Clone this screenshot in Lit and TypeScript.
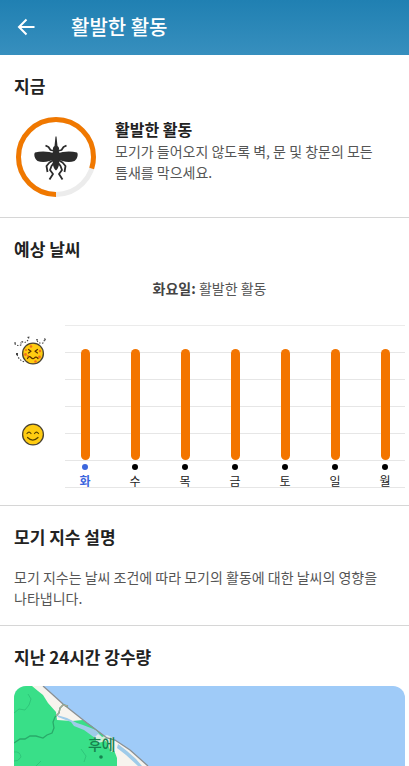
import { LitElement, html, css, svg } from "lit";
import { customElement, property, state } from "lit/decorators.js";
import { classMap } from "lit/directives/class-map.js";
import { styleMap } from "lit/directives/style-map.js";

interface Day {
  label: string;
  level: number;
}

const DAYS: Day[] = ["화", "수", "목", "금", "토", "일", "월"].map((label) => ({ label, level: 80 }));

@customElement("activity-ring")
class ActivityRing extends LitElement {
  @property({ type: Number }) value = 0;

  static styles = css`
    :host { display: block; flex: none; width: 80px; height: 80px; }
    svg { display: block; width: 100%; height: 100%; }
  `;

  render() {
    const half = svg`
      <path d="M39 33 C33 30 25 30 19 31.500 C17.500 33 18.500 38 21.500 40 C27 42 34 40.500 39 38 Z" fill="#2b2b2b"/>
      <g fill="none" stroke="#2b2b2b" stroke-width="1.800" stroke-linejoin="round">
        <path d="M38.500 30 L34.500 29 L32.500 26 L29.500 24.500"/>
        <path d="M38.500 38.500 L33.500 41.500 L30.500 45 L31.500 51"/>
        <path d="M38.500 41 L35.500 45 L34 49 L37 53 L33.500 58.500"/>
      </g>`;
    return html`
      <svg viewBox="0 0 80 80" role="img" aria-label="모기 활동">
        <circle cx="40" cy="40" r="37.5" fill="none" stroke="#ececec" stroke-width="5" />
        <circle cx="40" cy="40" r="37.5" fill="none" stroke="#f07800" stroke-width="5" pathLength="100"
          stroke-dasharray="${this.value} 100" transform="rotate(90 40 40)" />
        <g transform="translate(0 4)">
          ${half}
          <g transform="translate(80 0) scale(-1 1)">${half}</g>
          <path d="M39.500 15.500 L40.500 15.500 L41.500 25 C43.400 26 43.400 28.500 42.500 29.500 C44 31.500 44 35 42.800 37 C43.800 42 43 47 40 49.500 C37 47 36.200 42 37.200 37 C36 35 36 31.500 37.500 29.500 C36.600 28.500 36.600 26 38.500 25 Z" fill="#2b2b2b"/>
        </g>
      </svg>`;
  }
}

@customElement("mood-face")
class MoodFace extends LitElement {
  @property() mood = "happy";

  static styles = css`
    :host { display: block; width: 36px; height: 36px; }
    svg { display: block; width: 100%; height: 100%; }
  `;

  render() {
    const happy = svg`
      <g fill="none" stroke="#5a4300" stroke-width="1.2" stroke-linecap="round">
        <path d="M13 17.500 Q15 14.800 17 17.500 M20.500 17.500 Q22.500 14.800 24.500 17.500"/>
        <path d="M13.500 21.500 Q18.800 26.800 24 21.500"/>
      </g>`;
    const bitten = svg`
      <g fill="#f3701c">
        <circle cx="17" cy="11.500" r="1.300"/><circle cx="11.500" cy="19.500" r="1.400"/>
        <circle cx="26" cy="16" r="1.200"/><circle cx="25.500" cy="22" r="1.400"/>
        <circle cx="14" cy="21" r="1"/><circle cx="21.500" cy="26.500" r="1.300"/><circle cx="12" cy="15" r="1"/>
      </g>
      <g fill="none" stroke="#5a3000" stroke-width="1.200" stroke-linecap="round" stroke-linejoin="round">
        <path d="M14.500 14.500 L17 16.200 L14.500 18 M23.500 14.500 L21 16.200 L23.500 18"/>
        <path d="M13.500 23.500 Q15 20.500 17 22.500 T20.500 22.800 T24 23.500"/>
      </g>
      <g fill="none" stroke="#444" stroke-width="1.100" stroke-dasharray="1.500 1.500">
        <path d="M0.500 8.500 Q4 12 8 9.500 Q5.500 6 8 6.500 Q11 9 14 5"/>
        <path d="M23 5.500 Q25 9 29 8 L31 4"/>
        <path d="M3 19.500 Q5 25.500 11 27"/>
      </g>
      <path d="M13 2 L15.500 1.500 L15 4 Z M22 4 L24 4 L23 6 Z M30 3 L32 4 L31 6 Z M2 18 L4 18 L4 20 L2 20 Z M0 7 L2 7.500 L1.500 9 Z" fill="#444"/>`;
    return html`
      <svg viewBox="0 0 36 36" role="img" aria-label=${this.mood === "happy" ? "활동 없음" : "매우 활발"}>
        <circle cx="19" cy="18.500" r="10.400" fill="#fc1" stroke="#4a4230" stroke-width="1.300" />
        ${this.mood === "happy" ? happy : bitten}
      </svg>`;
  }
}

@customElement("forecast-chart")
class ForecastChart extends LitElement {
  @property({ attribute: false }) days: Day[] = [];
  @property({ type: Number }) selected = 0;

  static styles = css`
    :host { display: flex; }
    .scale {
      display: flex; flex-direction: column; justify-content: space-between;
      flex: none; width: 51px; height: 117px; padding-top: 10px;
    }
    .plot { display: grid; flex: 1; min-width: 0; }
    .lines, .days { grid-area: 1 / 1; }
    .lines { display: grid; grid-template-rows: repeat(6, 27px); border-top: 1px solid #ebebeb; }
    .line { border-bottom: 1px solid #e6e6e6; }
    .days {
      display: flex; justify-content: space-between;
      margin: 0; padding: 0; list-style: none;
    }
    .day { display: flex; flex-direction: column; align-items: center; width: 40px; }
    .track { display: flex; align-items: flex-end; height: 135px; }
    .bar { width: 9px; border-radius: 5px; background: #f37500; }
    .dot { width: 6px; height: 6px; margin-top: 4px; border-radius: 50%; background: #000; }
    .name { margin-top: 3px; font-size: 12px; line-height: 16px; color: #222; }
    .on .dot { background: #3b66dd; }
    .on .name { color: #3b66dd; font-weight: 700; }
  `;

  render() {
    return html`
      <div class="scale">
        <mood-face mood="bitten"></mood-face>
        <mood-face mood="happy"></mood-face>
      </div>
      <div class="plot">
        <div class="lines">${[1, 2, 3, 4, 5, 6].map(() => html`<div class="line"></div>`)}</div>
        <ul class="days">
          ${this.days.map((d, i) => html`
            <li class=${classMap({ day: true, on: i === this.selected })}>
              <div class="track"><div class="bar" style=${styleMap({ height: `${Math.round(d.level * 1.39)}px` })}></div></div>
              <div class="dot"></div>
              <div class="name">${d.label}</div>
            </li>`)}
        </ul>
      </div>`;
  }
}

@customElement("rain-map")
class RainMap extends LitElement {
  static styles = css`
    :host { display: block; height: 80px; border-radius: 12px 12px 0 0; overflow: hidden; background: #9fcbf8; }
    svg { display: block; width: 100%; height: 100%; }
    .place {
      font: 500 15px "Noto Sans CJK KR", sans-serif; fill: #16824f;
    }
  `;

  render() {
    return html`
      <svg viewBox="0 0 391 80" preserveAspectRatio="xMinYMin slice">
        <path d="M0 0 H29 L38 8 L49 18 L73 37 L93 52 L101 54 L116 64 L134 80 H0 Z" fill="#f7f4ee" />
        <path d="M0 0 H18 L24 5 L29 9 L34 17 L42 26 L43 34 L58 35 L69 34 L78 40 L93 52 L97 58 L100 64 L103 72 L103 80 H0 Z" fill="#39df88" />
        <path d="M43 29 L53 32 L63 37 L69 39 L82 44 L88 51 L81 52 L70 44 L60 40 L57 36 L44 31 Z M104 58 L113 65 L122 73 L128 80 L124 80 L112 69 L103 62 Z" fill="#9fcbe9" />
        <path d="M80 52 L84 48 L88 51 L93 49 L101 53 L101 65 L97 66 L92 55 L84 57 Z" fill="#f3f2ec" opacity="0.8" />
        <path d="M29 0 L38 8 L49 18 L73 37 L93 52 L101 54 L116 64 L134 80" fill="none" stroke="#8b9093" stroke-width="1.300" />
        <path d="M54 20 L49 19 L46 22 L45 27 L41 31 L39 36 L40 42 L38 47 L33 49 L29 52 L22 50 L16 50 L11 53 L6 53 L0 57" fill="none" stroke="#29aa6a" stroke-width="1.300" />
        <path d="M54 20 L49 19 L46 22 L45 27 L42 30" fill="none" stroke="#aaa39a" stroke-width="1.300" />
        <path d="M0 27 L5 23 L11 24 L15 19 L17 13 L14 8 M0 66 Q6 65 7 71 Q4 76 0 75 M67 63 L72 70 L70 76 M22 80 L27 75" fill="none" stroke="#2fc67a" stroke-width="1" />
        <text class="place" x="74" y="64">후에</text>
        <circle cx="87" cy="71" r="1.800" fill="#16824f" />
      </svg>`;
  }
}

@customElement("app-root")
class AppRoot extends LitElement {
  @state() private selected = 0;

  static styles = css`
    :host {
      display: block; background: #fff; color: #222;
      font-family: "Noto Sans CJK KR", "Noto Sans", sans-serif;
      font-size: 14px; line-height: 21px;
    }
    .bar {
      display: flex; align-items: center; gap: 33px; height: 54px; padding: 0 0 1px 14px;
      background: linear-gradient(#2080b2, #378fbe); color: #fff;
    }
    .back { display: flex; padding: 0; border: 0; background: none; color: inherit; cursor: pointer; }
    .title { margin: 0; font-size: 20px; line-height: 28px; font-weight: 500; }
    .section { padding: 19px 4px 16px 14px; border-bottom: 1px solid #d6d6d6; }
    .section.last { padding-bottom: 0; border: 0; }
    .heading { margin: 0 0 17px; font-size: 17px; line-height: 24px; font-weight: 700; }
    .status { display: flex; gap: 19px; padding: 2px 32px 4px 2px; }
    .level { margin: 0; font-size: 16px; line-height: 24px; font-weight: 700; }
    .text { margin: 0; color: #555; }
    .explain { padding: 1px 20px 0 0; }
    .chosen { margin: 0 0 26px; text-align: center; color: #555; }
    .chosen b { color: #444; }
  `;

  render() {
    return html`
      <header class="bar">
        <button class="back" aria-label="뒤로">
          <svg width="24" height="24" viewBox="0 0 24 24" fill="none" stroke="currentColor" stroke-width="2">
            <path d="M20.500 12 H5 M12.500 4.500 L5 12 L12.500 19.500" />
          </svg>
        </button>
        <h1 class="title">활발한 활동</h1>
      </header>
      <main>
        <section class="section">
          <h2 class="heading">지금</h2>
          <div class="status">
            <activity-ring value="80"></activity-ring>
            <div>
              <h3 class="level">활발한 활동</h3>
              <p class="text">모기가 들어오지 않도록 벽, 문 및 창문의 모든 틈새를 막으세요.</p>
            </div>
          </div>
        </section>
        <section class="section">
          <h2 class="heading">예상 날씨</h2>
          <p class="chosen"><b>화요일:</b> 활발한 활동</p>
          <forecast-chart .days=${DAYS} .selected=${this.selected}></forecast-chart>
        </section>
        <section class="section">
          <h2 class="heading">모기 지수 설명</h2>
          <p class="text explain">모기 지수는 날씨 조건에 따라 모기의 활동에 대한 날씨의 영향을 나타냅니다.</p>
        </section>
        <section class="section last">
          <h2 class="heading">지난 24시간 강수량</h2>
          <rain-map></rain-map>
        </section>
      </main>`;
  }
}
